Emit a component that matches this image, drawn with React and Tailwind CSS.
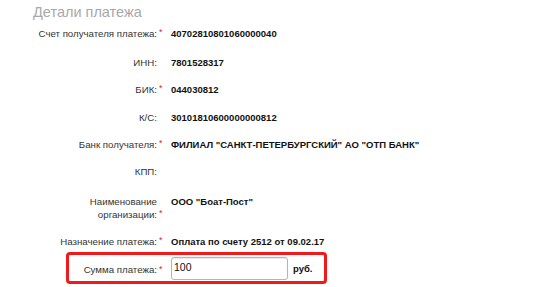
import React from "react";

const Star = () => (
  <span className="text-[#e8212a] text-[9px] leading-[13px] ml-[2px] relative -top-[1px]">*</span>
);

function Row({ label, value, req, mt }) {
  return (
    <div className={`flex items-start ${mt}`}>
      <div className="w-[157px] text-right text-[9.7px] leading-[13px] text-[#333]">
        {label}
      </div>
      <div className="w-[14px] h-[13px] flex items-start">{req && <Star />}</div>
      <div className="text-[9.5px] leading-[13px] font-bold text-[#111]">{value}</div>
    </div>
  );
}

export default function App() {
  return (
    <div
      className="w-[550px] h-[287px] bg-white overflow-hidden"
      style={{ fontFamily: '"Liberation Sans", Arial, sans-serif' }}
    >
      <div className="pt-[3px] pl-[33px] text-[14.5px] leading-[18px] text-[#a8a8a8]">
        Детали платежа
      </div>
      <Row mt="mt-[6px]" label="Счет получателя платежа:" req value="40702810801060000040" />
      <Row mt="mt-[16px]" label="ИНН:" value="7801528317" />
      <Row mt="mt-[14px]" label="БИК:" req value="044030812" />
      <Row mt="mt-[15px]" label="К/С:" value="30101810600000000812" />
      <Row mt="mt-[14px]" label="Банк получателя:" req value={'ФИЛИАЛ "САНКТ-ПЕТЕРБУРГСКИЙ" АО "ОТП БАНК"'} />
      <Row mt="mt-[14px]" label="КПП:" value="" />
      <div className="flex items-start mt-[17px]">
        <div className="w-[157px] text-right text-[9.7px] leading-[13px] text-[#333]">
          Наименование
          <br />
          организации:
        </div>
        <div className="w-[14px] h-[26px] flex items-start pt-[13px]"><Star /></div>
        <div className="text-[9.5px] leading-[13px] font-bold text-[#111]">ООО "Боат-Пост"</div>
      </div>
      <Row mt="mt-[14px]" label="Назначение платежа:" req value="Оплата по счету 2512 от 09.02.17" />
      <div className="mt-[4px] ml-[66px] w-[261px] h-[32px] border-[3px] border-[#f01a1a] rounded-[4px] flex items-center">
        <div className="w-[88px] text-right text-[9.7px] leading-[13px] text-[#333] pt-[2px]">
          Сумма платежа:
        </div>
        <div className="w-[14px] h-[13px] flex items-start pt-[2px]"><Star /></div>
        <div className="w-[117px] h-[23px] border border-[#aab7c6] rounded-[3px] bg-white flex items-center pl-[2px] text-[10.5px] text-[#111] shadow-[inset_0_1px_1px_rgba(0,0,0,0.08)]">
          100
        </div>
        <div className="ml-[5px] text-[9.5px] font-bold text-[#111] pt-[2px]">руб.</div>
      </div>
    </div>
  );
}
